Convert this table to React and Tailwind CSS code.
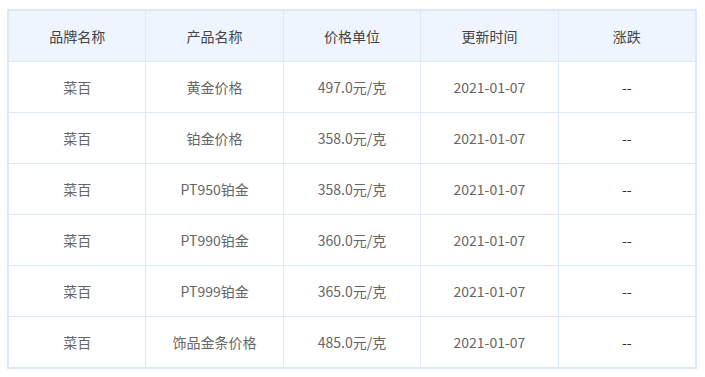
const headers = ["品牌名称", "产品名称", "价格单位", "更新时间", "涨跌"];

const rows = [
  ["菜百", "黄金价格", "497.0元/克", "2021-01-07", "--"],
  ["菜百", "铂金价格", "358.0元/克", "2021-01-07", "--"],
  ["菜百", "PT950铂金", "358.0元/克", "2021-01-07", "--"],
  ["菜百", "PT990铂金", "360.0元/克", "2021-01-07", "--"],
  ["菜百", "PT999铂金", "365.0元/克", "2021-01-07", "--"],
  ["菜百", "饰品金条价格", "485.0元/克", "2021-01-07", "--"],
];

function App() {
  return (
    <div
      className="w-[705px] h-[377px] bg-white pl-[7px] pt-[9px]"
      style={{ fontFamily: '"Microsoft YaHei", "Noto Sans CJK SC", sans-serif' }}
    >
      <div className="w-[690px] border-2 border-[#dde9fb] text-[14px]">
        <div className="flex h-[50px] bg-[#eef5fe] text-[#444]">
          {headers.map((h, i) => (
            <div
              key={i}
              className={`flex-1 flex items-center justify-center ${i > 0 ? "border-l border-[#dde9fb]" : ""}`}
            >
              {h}
            </div>
          ))}
        </div>
        {rows.map((row, r) => (
          <div key={r} className="flex h-[51px] border-t border-[#dde9fb] text-[#666]">
            {row.map((c, i) => (
              <div
                key={i}
                className={`flex-1 flex items-center justify-center ${i > 0 ? "border-l border-[#dde9fb]" : ""} ${i === 4 ? "text-[#333]" : ""}`}
              >
                {c}
              </div>
            ))}
          </div>
        ))}
      </div>
    </div>
  );
}

export default App;
